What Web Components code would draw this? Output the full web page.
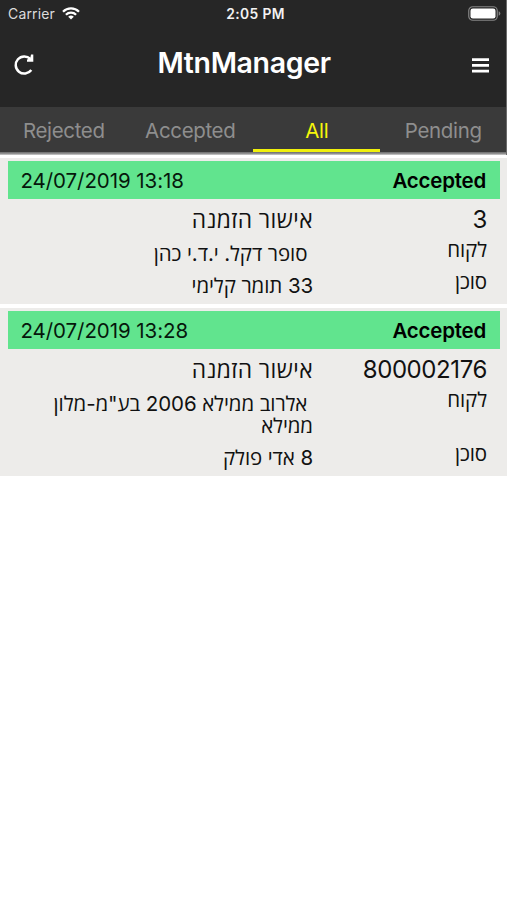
<!DOCTYPE html>
<html lang="en">
<head>
<meta charset="utf-8">
<title>MtnManager</title>
<style>
  body {
    margin: 0;
    background: #fff;
    font-family: Inter, "Open Sans", "Liberation Sans", sans-serif;
    color: #111;
  }
</style>
</head>
<body>
<mtn-app>
  <status-bar slot="top" carrier="Carrier" time="2:05 PM"></status-bar>
  <title-bar slot="top">MtnManager</title-bar>
  <tab-strip slot="top">
    <tab-item>Rejected</tab-item>
    <tab-item>Accepted</tab-item>
    <tab-item active>All</tab-item>
    <tab-item>Pending</tab-item>
  </tab-strip>
  <order-card date="24/07/2019 13:18" status="Accepted" number="3">
    <span slot="title">אישור הזמנה</span>
    <span slot="customer">&nbsp;סופר דקל. י.ד.י כהן</span>
    <span slot="agent">33 תומר קלימי</span>
  </order-card>
  <order-card date="24/07/2019 13:28" status="Accepted" number="800002176">
    <span slot="title">אישור הזמנה</span>
    <span slot="customer">&nbsp;אלרוב ממילא 2006 בע"מ-מלון<br>ממילא</span>
    <span slot="agent">8 אדי פולק</span>
  </order-card>
</mtn-app>

<script>
/**
 * Creates a template from a markup string.
 *
 * @param {string} html - The markup.
 * @returns {HTMLTemplateElement} The template.
 */
const createTemplate = (html) => {
  const template = document.createElement('template')
  template.innerHTML = html
  return template
}

const appTemplate = createTemplate(`
  <style>
    :host {
      display: block;
    }
    header {
      background: #262626;
      border-right: 1px solid #6b6b6b;
    }
    main {
      display: flex;
      flex-direction: column;
      gap: 4.5px;
      padding-top: 3px;
    }
  </style>
  <header><slot name="top"></slot></header>
  <main><slot></slot></main>
`)

const statusTemplate = createTemplate(`
  <style>
    :host {
      display: grid;
      grid-template-columns: 1fr auto 1fr;
      align-items: center;
      height: 28px;
      padding: 0 5px 0 8px;
      color: #f2f2f2;
      font-size: 14px;
      line-height: 28px;
    }
    .left {
      display: flex;
      align-items: center;
      gap: 7px;
      color: #dcdcdc;
      letter-spacing: 0.15px;
    }
    .time {
      font-size: 13.8px;
      font-weight: 600;
      letter-spacing: 0.4px;
      padding-left: 2px;
    }
    .battery {
      justify-self: end;
      margin-top: -2px;
    }
    svg {
      display: block;
    }
    .left svg {
      margin-top: -1px;
    }
  </style>
  <div class="left">
    <span class="carrier"></span>
    <svg width="18" height="13" viewBox="0 0 18 13" fill="none" stroke="#fff" stroke-width="2.3">
      <path d="M1 4.7a11.4 11.4 0 0 1 16 0"/>
      <path d="M3.9 7.7a7.3 7.3 0 0 1 10.2 0"/>
      <path d="M9 12.6 6.2 9.8a4 4 0 0 1 5.6 0z" fill="#fff" stroke="none"/>
    </svg>
  </div>
  <span class="time"></span>
  <svg class="battery" width="33" height="15" viewBox="0 0 33 15">
    <rect x="0.75" y="0.75" width="28.5" height="13.5" rx="4" fill="none" stroke="#858585" stroke-width="1.2"/>
    <rect x="2.5" y="2.5" width="25" height="10" rx="2.3" fill="#fff"/>
    <path d="M30.7 5.2q1.6.6 1.6 2.3t-1.6 2.3z" fill="#858585"/>
  </svg>
`)

const titleTemplate = createTemplate(`
  <style>
    :host {
      display: grid;
      grid-template-columns: 144.5px auto 1fr;
      align-items: center;
      height: 68px;
      padding: 0 17.5px 11px 13px;
      color: #fff;
    }
    h1 {
      margin: 2px 0 0;
      font-size: 28.5px;
      font-weight: 600;
      letter-spacing: -0.35px;
      line-height: 36px;
    }
    svg {
      display: block;
      margin-top: 6px;
    }
    .menu {
      justify-self: end;
    }
  </style>
  <svg width="22" height="22" viewBox="0 0 22 22" fill="none" stroke="#fff" stroke-width="2.5">
    <path d="M18.3 16A8.6 8.6 0 1 1 17.4 4.9"/>
    <path d="M20.3 0.6V7.7H14V5.6L17.2 4.6 18 0.6z" fill="#fff" stroke="none"/>
  </svg>
  <h1><slot></slot></h1>
  <svg class="menu" width="17" height="15" viewBox="0 0 17 15" fill="#fff">
    <path d="M0 0.3h17v2.8H0zM0 6h17v2.8H0zM0 11.7h17v2.8H0z"/>
  </svg>
`)

const tabStripTemplate = createTemplate(`
  <style>
    :host {
      display: grid;
      grid-template-columns: repeat(4, 1fr);
      height: 45px;
      padding-bottom: 3px;
      background:
        linear-gradient(#6a6a6a, #8f8f8f 50%, #d0d0d0) bottom / 100% 3px no-repeat,
        #3a3a3a;
    }
  </style>
  <slot></slot>
`)

const tabTemplate = createTemplate(`
  <style>
    :host {
      display: block;
      box-sizing: border-box;
      height: 45px;
      color: #8e8e8e;
      font-size: 20.5px;
      letter-spacing: -0.35px;
      line-height: 47px;
      text-align: center;
      text-indent: 1px;
      border-bottom: 3px solid transparent;
    }
    :host([active]) {
      color: #f5f50a;
      border-bottom-color: #f0f00c;
    }
  </style>
  <slot></slot>
`)

const cardTemplate = createTemplate(`
  <style>
    :host {
      display: block;
      background: #edecea;
      padding: 2.5px 7px 0 7.5px;
    }
    .head {
      display: flex;
      justify-content: space-between;
      height: 38.5px;
      padding: 0 14px 0 13px;
      background: #61e48e;
      color: #06180c;
      font-size: 20.5px;
      letter-spacing: -0.07px;
      line-height: 39px;
    }
    .status {
      color: #000;
      font-weight: 600;
      letter-spacing: -0.22px;
    }
    .body {
      direction: rtl;
      display: grid;
      grid-template-columns: 160px 1fr;
      column-gap: 14px;
      padding-right: 13px;
      font-size: 20.5px;
      line-height: 22px;
    }
    .number,
    .title {
      height: 39.5px;
      font-size: 24px;
      letter-spacing: -0.4px;
      line-height: 41px;
    }
    .title {
      font-size: 22.8px;
      font-weight: 500;
      letter-spacing: 0.4px;
    }
    .label {
      font-weight: 500;
      letter-spacing: -0.1px;
    }
    .value {
      padding: 4px 0 6.5px;
      letter-spacing: -0.1px;
    }
  </style>
  <div class="head"><span class="date"></span><span class="status"></span></div>
  <div class="body">
    <div class="number"></div>
    <div class="title"><slot name="title"></slot></div>
    <div class="label">לקוח</div>
    <div class="value"><slot name="customer"></slot></div>
    <div class="label">סוכן</div>
    <div class="value"><slot name="agent"></slot></div>
  </div>
`)

/**
 * Registers an element and fills nodes in its shadow root from attributes.
 *
 * @param {string} name - The tag name.
 * @param {HTMLTemplateElement} template - The template to clone.
 * @param {string[]} fields - Attributes shown in the node with the same class.
 */
const define = (name, template, fields = []) => {
  customElements.define(name,
    class extends HTMLElement {
      /**
       * Creates an instance of the current type.
       */
      constructor () {
        super()
        this.attachShadow({ mode: 'open' })
          .appendChild(template.content.cloneNode(true))
      }

      /**
       * Called after the element is inserted into the DOM.
       */
      connectedCallback () {
        for (const field of fields) {
          this.shadowRoot.querySelector(`.${field}`).textContent = this.getAttribute(field)
        }
      }
    }
  )
}

define('mtn-app', appTemplate)
define('status-bar', statusTemplate, ['carrier', 'time'])
define('title-bar', titleTemplate)
define('tab-strip', tabStripTemplate)
define('tab-item', tabTemplate)
define('order-card', cardTemplate, ['date', 'status', 'number'])
</script>
</body>
</html>
